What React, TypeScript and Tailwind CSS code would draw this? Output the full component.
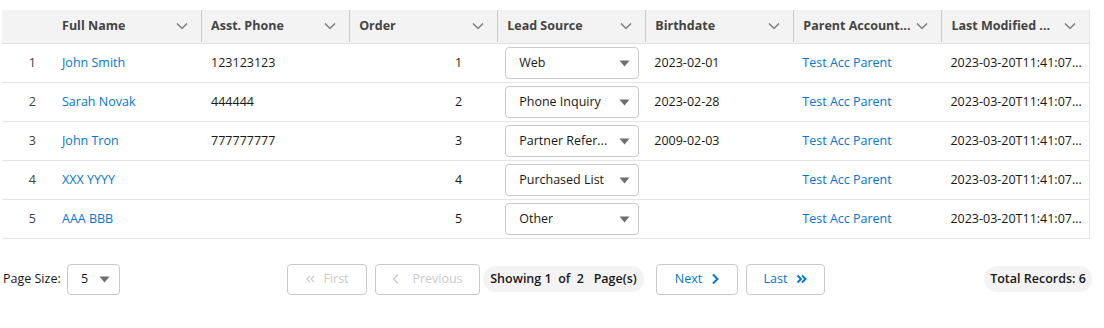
import React from "react";

type Row = {
  n: number;
  name: string;
  phone: string;
  order: number;
  lead: string;
  birth: string;
  parent: string;
  modified: string;
};

const rows: Row[] = [
  { n: 1, name: "John Smith", phone: "123123123", order: 1, lead: "Web", birth: "2023-02-01", parent: "Test Acc Parent", modified: "2023-03-20T11:41:07..." },
  { n: 2, name: "Sarah Novak", phone: "444444", order: 2, lead: "Phone Inquiry", birth: "2023-02-28", parent: "Test Acc Parent", modified: "2023-03-20T11:41:07..." },
  { n: 3, name: "John Tron", phone: "777777777", order: 3, lead: "Partner Refer...", birth: "2009-02-03", parent: "Test Acc Parent", modified: "2023-03-20T11:41:07..." },
  { n: 4, name: "XXX YYYY", phone: "", order: 4, lead: "Purchased List", birth: "", parent: "Test Acc Parent", modified: "2023-03-20T11:41:07..." },
  { n: 5, name: "AAA BBB", phone: "", order: 5, lead: "Other", birth: "", parent: "Test Acc Parent", modified: "2023-03-20T11:41:07..." },
];

const headers = ["Full Name", "Asst. Phone", "Order", "Lead Source", "Birthdate", "Parent Account...", "Last Modified ..."];

const Chevron = () => (
  <svg width="12" height="8" viewBox="0 0 12 8" className="shrink-0">
    <path d="M1 1.5l5 5 5-5" fill="none" stroke="#706e6b" strokeWidth="1.2" />
  </svg>
);

const Caret = () => (
  <svg width="11" height="7" viewBox="0 0 11 7" className="shrink-0">
    <path d="M0.5 0.5h10L5.5 6.5z" fill="#706e6b" />
  </svg>
);

const Combo = ({ value }: { value: string }) => (
  <div className="flex h-[32px] w-[134px] items-center justify-between rounded-[4px] border border-[#c9c9c9] bg-white pl-[13px] pr-[8px]">
    <span className="truncate text-[#181818]">{value}</span>
    <Caret />
  </div>
);

export default function App() {
  return (
    <div className="w-[1104px] h-[328px] bg-white text-[12.5px] text-[#181818]" style={{ fontFamily: '"Open Sans", "Noto Sans", sans-serif' }}>
      <div className="pt-[10px] pl-[2px]">
        <table className="table-fixed w-[1088px] border-collapse border-r border-[#e5e5e5]">
          <colgroup>
            <col className="w-[51px]" />
            {headers.map((h) => (
              <col key={h} className="w-[148px]" />
            ))}
          </colgroup>
          <thead>
            <tr className="h-[33px] bg-[#f3f3f3] border-b border-[#e0e0e0]">
              <th></th>
              {headers.map((h, i) => (
                <th key={h} className="p-0 font-bold text-[#444444] text-left">
                  <div className={`flex h-[32px] items-center justify-between pl-[9px] pr-[13px] ${i > 0 ? "border-l border-[#c9c9c9]" : ""}`}>
                    <span className="truncate pt-[1px]">{h}</span>
                    <Chevron />
                  </div>
                </th>
              ))}
            </tr>
          </thead>
          <tbody>
            {rows.map((r) => (
              <tr key={r.n} className="h-[39px] border-b border-[#e5e5e5]">
                <td className="text-right pr-[17px] pt-[2px] text-[#3e3e3c]">{r.n}</td>
                <td className="pl-[9px] pt-[2px] text-[#0176d3] truncate">{r.name}</td>
                <td className="pl-[10px] pt-[2px] truncate">{r.phone}</td>
                <td className="text-right pr-[35px] pt-[2px]">{r.order}</td>
                <td className="pl-[8px] pt-[1px]">
                  <Combo value={r.lead} />
                </td>
                <td className="pl-[9px] pt-[2px]">{r.birth}</td>
                <td className="pl-[9px] pt-[2px] text-[#0176d3] truncate">{r.parent}</td>
                <td className="pl-[9px] pt-[2px] truncate">{r.modified}</td>
              </tr>
            ))}
          </tbody>
        </table>
      </div>

      <div className="mt-[25px] flex items-center pl-[3px] pr-[12px]">
        <div className="flex w-[117px] items-center justify-between">
          <span>Page Size:</span>
          <div className="flex h-[31px] w-[53px] items-center justify-between rounded-[4px] border border-[#c9c9c9] pl-[13px] pr-[9px]">
            <span>5</span>
            <Caret />
          </div>
        </div>

        <div className="ml-[167px] flex items-center">
          <button className="flex h-[31px] w-[80px] items-center justify-center gap-[8px] rounded-[4px] border border-[#c9c9c9] text-[#c9c9c9]">
            <svg width="10" height="10" viewBox="0 0 10 10">
              <path d="M5 2L2 5l3 3M9 2L6 5l3 3" fill="none" stroke="#c9c9c9" strokeWidth="1.1" />
            </svg>
            <span>First</span>
          </button>
          <button className="ml-[8px] flex h-[31px] w-[105px] items-center justify-center gap-[12px] rounded-[4px] border border-[#c9c9c9] text-[#c9c9c9]">
            <svg width="8" height="12" viewBox="0 0 8 12">
              <path d="M6 1.5L1.5 6 6 10.5" fill="none" stroke="#c9c9c9" strokeWidth="1.2" />
            </svg>
            <span>Previous</span>
          </button>
          <div className="ml-[3px] flex h-[26px] w-[161px] items-center justify-center rounded-full bg-[#f3f3f3] font-semibold whitespace-pre">
            Showing 1  of  2   Page(s)
          </div>
          <button className="ml-[12px] flex h-[31px] w-[82px] items-center justify-center gap-[9px] rounded-[4px] border border-[#c9c9c9] text-[#0176d3]">
            <span>Next</span>
            <svg width="8" height="12" viewBox="0 0 8 12">
              <path d="M2 1.5L6.5 6 2 10.5" fill="none" stroke="#0176d3" strokeWidth="2" />
            </svg>
          </button>
          <button className="ml-[8px] flex h-[31px] w-[79px] items-center justify-center gap-[9px] rounded-[4px] border border-[#c9c9c9] text-[#0176d3]">
            <span>Last</span>
            <svg width="11" height="10" viewBox="0 0 11 10">
              <path d="M1.5 1.5L5 5 1.5 8.5M6 1.5L9.5 5 6 8.5" fill="none" stroke="#0176d3" strokeWidth="1.9" />
            </svg>
          </button>
        </div>

        <div className="ml-auto flex h-[26px] w-[108px] items-center justify-center rounded-full bg-[#f3f3f3] font-semibold">
          Total Records: 6
        </div>
      </div>
    </div>
  );
}
